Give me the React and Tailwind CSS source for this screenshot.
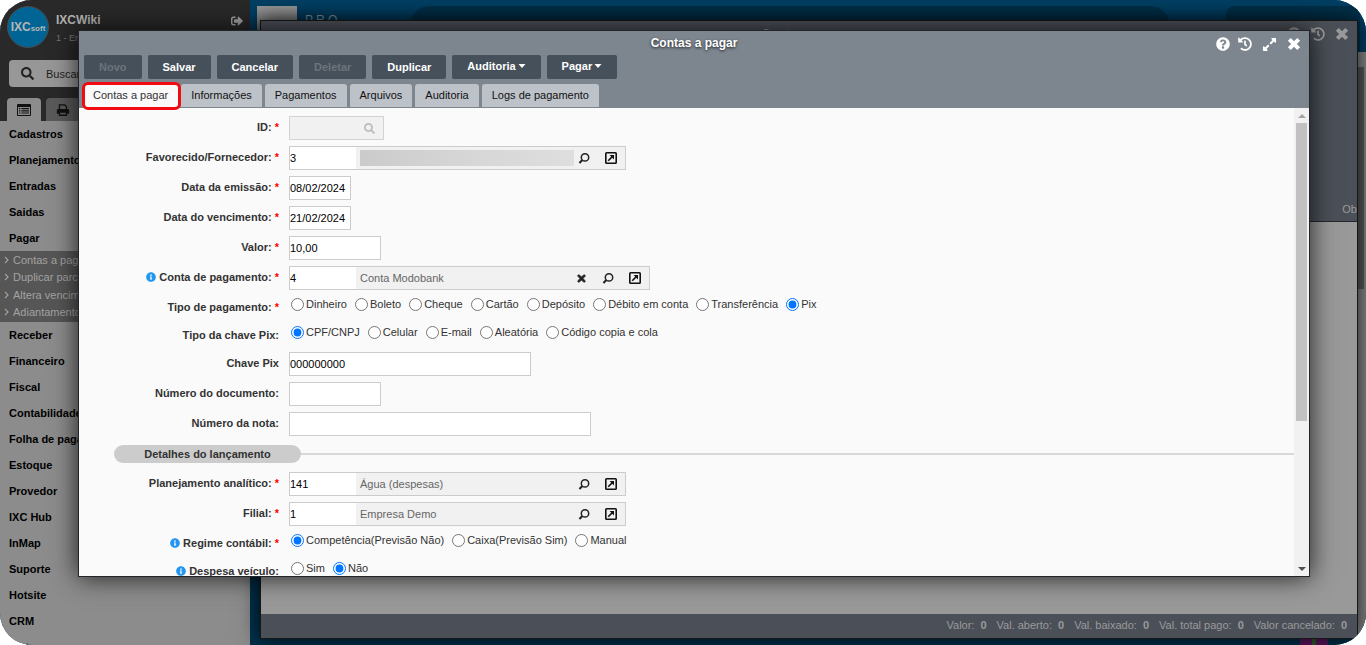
import React, { useState } from "react";
import {
  FaExpandAlt,
  FaHistory,
  FaInfoCircle,
  FaQuestionCircle,
  FaSearch,
  FaSignOutAlt,
  FaTimes,
} from "react-icons/fa";

const menuTop = ["Cadastros", "Planejamento", "Entradas", "Saidas", "Pagar"];

const payMenu = [
  "Contas a pagar",
  "Duplicar parcelas",
  "Altera vencimento",
  "Adiantamentos",
];

const menuBottom = [
  "Receber",
  "Financeiro",
  "Fiscal",
  "Contabilidade",
  "Folha de pagamento",
  "Estoque",
  "Provedor",
  "IXC Hub",
  "InMap",
  "Suporte",
  "Hotsite",
  "CRM",
  "Sistema",
];

const tabs = [
  "Contas a pagar",
  "Informações",
  "Pagamentos",
  "Arquivos",
  "Auditoria",
  "Logs de pagamento",
];

const actions = [
  { label: "Novo", disabled: true },
  { label: "Salvar" },
  { label: "Cancelar" },
  { label: "Deletar", disabled: true },
  { label: "Duplicar" },
  { label: "Auditoria", menu: true },
  { label: "Pagar", menu: true },
];

const totals = [
  "Valor:",
  "Val. aberto:",
  "Val. baixado:",
  "Val. total pago:",
  "Valor cancelado:",
];

function LookupIcon() {
  return (
    <svg viewBox="0 0 12 12" className="size-3" fill="none" stroke="#222">
      <circle cx="7" cy="5.4" r="3.7" strokeWidth="1.5" />
      <path d="M4.4 8 1.4 11" strokeWidth="2" />
    </svg>
  );
}

function OpenIcon() {
  return (
    <svg viewBox="0 0 12 12" className="size-3" fill="none" stroke="#111">
      <rect x="0.8" y="0.8" width="10.4" height="10.4" rx="0.8" strokeWidth="1.6" />
      <path d="M3.2 8.8 7.6 4.4" strokeWidth="1.6" />
      <path d="M4.6 3h4.4v4.4z" fill="#111" stroke="none" />
    </svg>
  );
}

function ListIcon() {
  return (
    <svg viewBox="0 0 14 12" className="h-3 w-3.5" fill="#111">
      <path d="M1 0h12a1 1 0 0 1 1 1v10a1 1 0 0 1-1 1H1a1 1 0 0 1-1-1V1a1 1 0 0 1 1-1zm0 3v8h12V3z" fillRule="evenodd" />
      <path d="M2 4h1.4v1.2H2zM4.4 4H12v1.2H4.4zM2 6.2h1.4v1.2H2zM4.4 6.2H12v1.2H4.4zM2 8.4h1.4v1.2H2zM4.4 8.4H12v1.2H4.4z" />
    </svg>
  );
}

function PrinterIcon() {
  return (
    <svg viewBox="0 0 14 13" className="h-3 w-3.5" fill="none" stroke="#111">
      <path d="M3.2 6V1h5.6l2 2v3" strokeWidth="1.4" />
      <path d="M1.8 5.5h10.4A1.5 1.5 0 0 1 13.7 7v3.5H.3V7a1.5 1.5 0 0 1 1.5-1.5z" fill="#111" stroke="none" />
      <path d="M3.2 8.7h7.6v3.5H3.2z" fill="#5a5a5a" strokeWidth="1.4" />
    </svg>
  );
}

function Caret() {
  return (
    <svg viewBox="0 0 8 4" className="h-1 w-2" fill="#fff">
      <path d="M0.5 0h7L4 4z" />
    </svg>
  );
}

function CloseIcon() {
  return (
    <svg viewBox="0 0 14 14" className="size-3.5" fill="none" stroke="currentColor">
      <path d="M2.3 2.3 11.7 11.7M11.7 2.3 2.3 11.7" strokeWidth="4" />
    </svg>
  );
}

function Row({ label, id, required, info, children }) {
  return (
    <div className="flex h-[30px] items-start gap-2.5">
      <label
        htmlFor={id}
        className="flex w-[200px] shrink-0 items-center justify-end gap-[3px] font-bold leading-[22px] whitespace-nowrap"
      >
        {info && <FaInfoCircle className="size-[10px] text-[#2196f3]" />}
        {label}
        {required && <span className="text-[#f00]">*</span>}
      </label>
      {children}
    </div>
  );
}

function TextField({ label, id, required, value, width }) {
  return (
    <Row label={label} id={id} required={required}>
      <input
        id={id}
        defaultValue={value}
        className={`${width} h-6 border border-[#ccc] bg-white text-black`}
      />
    </Row>
  );
}

function LookupField({ label, id, required, info, value, text, clearable, width }) {
  return (
    <Row label={label} id={id} required={required} info={info}>
      <div className={`${width} flex h-6 items-center border border-[#ccc] bg-[#f1f1f1] pr-px`}>
        <input
          id={id}
          defaultValue={value}
          className="h-full w-[66px] bg-white text-black"
        />
        {text ? (
          <span className="flex-1 pl-1 text-[#666]">{text}</span>
        ) : (
          <span className="-mr-1 ml-1 h-4 flex-1 bg-linear-to-r from-[#cbcbcb] via-[#d6d6d6] to-[#dedede]"></span>
        )}
        {clearable && (
          <button aria-label="Limpar" className="flex w-[25px] justify-center">
            <FaTimes className="size-[11px] stroke-[#222] stroke-[40] text-[#222]" />
          </button>
        )}
        <button aria-label="Pesquisar" className="flex w-[27px] justify-center">
          <LookupIcon />
        </button>
        <button aria-label="Abrir" className="flex w-[27px] justify-center">
          <OpenIcon />
        </button>
      </div>
    </Row>
  );
}

function RadioField({ label, name, required, info, options, initial }) {
  const [selected, setSelected] = useState(initial);

  return (
    <div role="radiogroup" aria-label={label} className="flex h-7 items-start gap-2.5">
      <div className="flex w-[200px] shrink-0 items-center justify-end gap-[3px] font-bold leading-[22px] whitespace-nowrap">
        {info && <FaInfoCircle className="size-[10px] text-[#2196f3]" />}
        {label}
        {required && <span className="text-[#f00]">*</span>}
      </div>
      <div className="flex gap-2 pl-0.5">
        {options.map((option) => (
          <label
            key={option}
            className="flex items-center gap-0.5 leading-4 whitespace-nowrap"
          >
            <input
              type="radio"
              name={name}
              checked={selected === option}
              onChange={() => setSelected(option)}
              className="size-[13px]"
            />
            {option}
          </label>
        ))}
      </div>
    </div>
  );
}

function Sidebar() {
  return (
    <aside className="flex w-[250px] shrink-0 flex-col overflow-hidden bg-[#8c8c8c] text-black">
      <div className="bg-[#292929]">
        <div className="flex h-[54px] items-center gap-[7px] px-[7px]">
          <div className="flex size-[42px] shrink-0 items-center justify-center rounded-full border border-[#4a4a4a] bg-[#006594] text-[#b5b5b5]">
            <span className="flex items-baseline text-xs font-bold leading-none">
              IXC<span className="text-[8px]">soft</span>
            </span>
          </div>
          <div className="flex-1 pt-0.5">
            <p className="text-xs font-bold leading-5 text-[#b4b4b4]">IXCWiki</p>
            <p className="text-[9px] leading-4 text-[#777]">1 - Empresa Demo</p>
          </div>
          <button aria-label="Sair" className="mb-3">
            <FaSignOutAlt className="size-3 text-[#a5a5a5]" />
          </button>
        </div>
        <div className="px-[9px] pt-1.5">
          <label className="flex h-[27px] items-center gap-3 rounded bg-[#979797] pl-3">
            <FaSearch className="size-[13px] shrink-0 text-[#222]" />
            <input
              placeholder="Buscar"
              aria-label="Buscar"
              className="w-full text-[11px] placeholder:text-[#222]"
            />
          </label>
        </div>
        <div className="mt-[11px] flex gap-[5px] px-[7px]">
          <button
            aria-label="Menu"
            className="flex h-[23px] w-[34px] items-center justify-center rounded-t-sm bg-[#8c8c8c]"
          >
            <ListIcon />
          </button>
          <button
            aria-label="Relatórios"
            className="flex h-[23px] w-[34px] items-center justify-center rounded-t-sm bg-[#5a5a5a]"
          >
            <PrinterIcon />
          </button>
        </div>
      </div>
      <nav className="font-bold whitespace-nowrap">
        {menuTop.map((item) => (
          <a key={item} href="#" className="block h-[26px] pl-[9px] leading-[26px]">
            {item}
          </a>
        ))}
        <div className="flex h-[71px] flex-col bg-[#565656] pb-px font-normal text-[#a3a3a3]">
          {payMenu.map((item) => (
            <a key={item} href="#" className="flex flex-1 items-center gap-1 pl-1">
              <svg viewBox="0 0 5 8" className="h-2 w-[5px]" fill="none" stroke="#a3a3a3">
                <path d="M1 0.8 4 4 1 7.2" strokeWidth="1.2" />
              </svg>
              {item}
            </a>
          ))}
        </div>
        {menuBottom.map((item) => (
          <a key={item} href="#" className="block h-[26px] pl-[9px] leading-[26px]">
            {item}
          </a>
        ))}
      </nav>
    </aside>
  );
}

function Desktop() {
  return (
    <main className="relative flex min-w-0 flex-1 flex-col justify-between bg-linear-to-b from-[#004064] to-[#00314c]">
      <div className="flex items-start pl-[7px] pt-1.5">
        <div className="h-12 w-10 bg-linear-to-b from-[#999] to-[#777]"></div>
        <span className="ml-2 mt-1.5 w-[105px] text-xs text-[#8aa0ac]">P R O —</span>
        <div className="h-12 flex-1 rounded-t-[20px] bg-[#00314b]"></div>
        <div className="ml-14 mr-1.5 h-12 w-[134px] rounded-t-lg bg-[#00314b]"></div>
      </div>
      <div className="flex justify-end pr-[38px]">
        <div className="flex h-1.5 w-7 justify-center bg-[#5d1560]">
          <div className="w-1 bg-[#2f5d2a]"></div>
        </div>
      </div>
      {/* page scrollbar */}
      <div className="absolute top-[52px] right-0 bottom-0 w-[9px] bg-[#858585]">
        <div className="mt-[15px] mr-0.5 h-[222px] bg-[#585858]"></div>
      </div>
    </main>
  );
}

function ListWindow() {
  return (
    <section className="absolute top-5 right-2 bottom-1.5 left-[260px] flex flex-col border border-[#161616] bg-[#999] text-[#9a9a9a] shadow-[0_0_20px_rgba(0,0,0,0.8)]">
      <header className="flex h-[201px] flex-col justify-between border-b border-[#24272b] bg-[#4b5058]">
        <div className="grid h-[26px] grid-cols-[1fr_auto_1fr] items-center pr-2 text-xs font-bold">
          <span></span>
          <h2>Contas a pagar</h2>
          <div className="flex items-center justify-end gap-2.5">
            <FaQuestionCircle className="size-3.5" />
            <FaHistory className="size-3.5" />
            <CloseIcon />
          </div>
        </div>
        <div className="self-end pb-1 leading-4">Ob</div>
      </header>
      <div className="flex-1"></div>
      <footer className="flex h-6 items-center justify-end gap-2.5 bg-[#4b5058] pr-2.5 pb-0.5">
        {totals.map((total) => (
          <span key={total} className="flex gap-1.5">
            {total} <b>0</b>
          </span>
        ))}
      </footer>
    </section>
  );
}

function PayableWindow() {
  const [activeTab, setActiveTab] = useState("Contas a pagar");

  return (
    <section
      role="dialog"
      aria-label="Contas a pagar"
      className="absolute top-[30px] right-14 bottom-[68px] left-[78px] flex flex-col border border-[#22262a] bg-[#fafafa] text-[#333] shadow-[0_0_24px_rgba(0,0,0,0.8)]"
    >
      <header className="bg-[#7d868f] px-[5px] pb-px">
        <div className="grid h-6 grid-cols-[1fr_auto_1fr] items-center text-white">
          <span></span>
          <h1 className="text-xs font-bold [text-shadow:0_1px_3px_rgba(0,0,0,0.8)]">
            Contas a pagar
          </h1>
          <div className="flex items-center justify-end gap-2.5 pt-0.5 pr-[3px]">
            <button aria-label="Ajuda">
              <FaQuestionCircle className="size-3.5" />
            </button>
            <button aria-label="Histórico" className="-ml-0.5">
              <FaHistory className="size-3.5" />
            </button>
            <button aria-label="Expandir">
              <FaExpandAlt className="size-[15px]" />
            </button>
            <button aria-label="Fechar">
              <CloseIcon />
            </button>
          </div>
        </div>
        <div className="flex gap-1.5">
          {actions.map((action) => (
            <button
              key={action.label}
              disabled={action.disabled}
              className={`flex h-6 items-center gap-0.5 rounded-xs bg-[#46505a] px-[15px] font-bold text-white disabled:text-[#6b747d] ${
                action.menu ? "pb-0.5" : ""
              }`}
            >
              {action.label}
              {action.menu && <Caret />}
            </button>
          ))}
        </div>
        <div role="tablist" className="-ml-px mt-[5px] flex gap-[3px]">
          {tabs.map((tab) => (
            <button
              key={tab}
              role="tab"
              aria-selected={activeTab === tab}
              onClick={() => setActiveTab(tab)}
              className={`relative h-[23px] rounded-t-[3px] px-2.5 pb-0.5 ${
                activeTab === tab ? "bg-[#fafafa] text-[#333]" : "bg-[#bdc2c9] text-[#111]"
              }`}
            >
              {tab}
              {activeTab === tab && (
                <span className="absolute -top-0.5 -right-[3px] -bottom-[3px] -left-px z-10 rounded-md border-3 border-[#f00b12]"></span>
              )}
            </button>
          ))}
        </div>
      </header>

      <div className="flex min-h-0 flex-1">
        <form className="min-w-0 flex-1 overflow-hidden pt-2">
          <Row label="ID:" id="id" required>
            <div className="flex h-6 w-[95px] items-center border border-[#d3d3d3] bg-[#f1f1f1]">
              <input id="id" disabled className="h-full w-[66px]" />
              <button aria-label="Pesquisar" disabled className="flex flex-1 justify-center">
                <FaSearch className="size-[11px] text-[#bbb]" />
              </button>
            </div>
          </Row>
          <LookupField label="Favorecido/Fornecedor:" id="fornecedor" required value="3" width="w-[337px]" />
          <TextField label="Data da emissão:" id="emissao" required value="08/02/2024" width="w-[62px]" />
          <TextField label="Data do vencimento:" id="vencimento" required value="21/02/2024" width="w-[62px]" />
          <TextField label="Valor:" id="valor" required value="10,00" width="w-[92px]" />
          <LookupField label="Conta de pagamento:" id="conta" required info value="4" text="Conta Modobank" clearable width="w-[361px]" />
          <RadioField
            label="Tipo de pagamento:"
            name="tipo"
            required
            initial="Pix"
            options={["Dinheiro", "Boleto", "Cheque", "Cartão", "Depósito", "Débito em conta", "Transferência", "Pix"]}
          />
          <RadioField
            label="Tipo da chave Pix:"
            name="tipoChave"
            initial="CPF/CNPJ"
            options={["CPF/CNPJ", "Celular", "E-mail", "Aleatória", "Código copia e cola"]}
          />
          <TextField label="Chave Pix" id="chave" value="000000000" width="w-[242px]" />
          <TextField label="Número do documento:" id="documento" width="w-[92px]" />
          <TextField label="Número da nota:" id="nota" width="w-[302px]" />

          <div className="flex h-[30px] items-center pb-1.5 pl-[35px]">
            <h3 className="w-[187px] rounded-full bg-[#ccc] text-center font-bold leading-[18px]">
              Detalhes do lançamento
            </h3>
            <div className="h-0.5 flex-1 bg-[#d8d8d8]"></div>
          </div>

          <LookupField label="Planejamento analítico:" id="planejamento" required value="141" text="Água (despesas)" width="w-[337px]" />
          <LookupField label="Filial:" id="filial" required value="1" text="Empresa Demo" width="w-[337px]" />
          <RadioField
            label="Regime contábil:"
            name="regime"
            required
            info
            initial="Competência(Previsão Não)"
            options={["Competência(Previsão Não)", "Caixa(Previsão Sim)", "Manual"]}
          />
          <RadioField label="Despesa veículo:" name="veiculo" info initial="Não" options={["Sim", "Não"]} />
        </form>

        <div className="flex w-[15px] flex-col bg-[#f1f1f1] px-0.5">
          <div className="flex h-[15px] items-center justify-center">
            <svg viewBox="0 0 8 4" className="h-1 w-2" fill="#a3a3a3">
              <path d="M0 4h8L4 0z" />
            </svg>
          </div>
          <div className="flex-1">
            <div className="h-[68%] bg-[#c1c1c1]"></div>
          </div>
          <div className="flex h-[15px] items-center justify-center">
            <svg viewBox="0 0 8 4" className="h-1 w-2" fill="#505050">
              <path d="M0 0h8L4 4z" />
            </svg>
          </div>
        </div>
      </div>
    </section>
  );
}

export default function App() {
  return (
    <div className="relative flex h-screen overflow-hidden rounded-[32px] bg-[#003a5a] font-['Liberation_Sans',Arial,sans-serif] text-[11px] leading-4">
      <Sidebar />
      <Desktop />
      <ListWindow />
      <PayableWindow />
    </div>
  );
}
